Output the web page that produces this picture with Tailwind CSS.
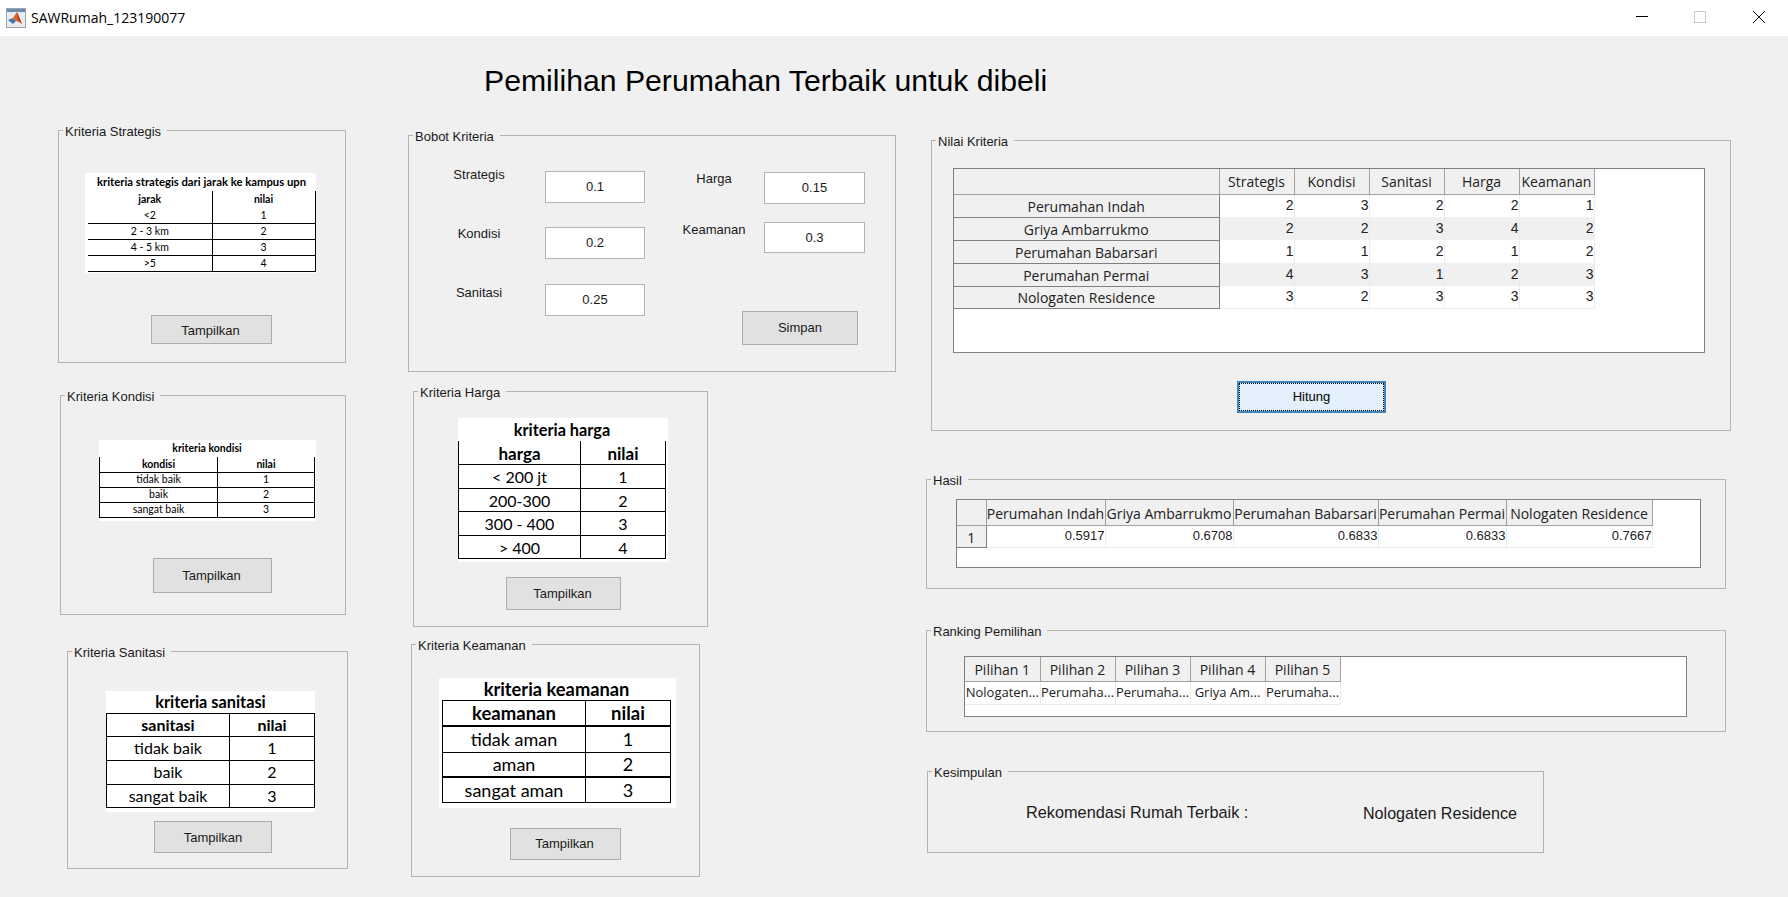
<!DOCTYPE html>
<html lang="id">
<head>
  <meta charset="UTF-8">
  <meta name="viewport" content="width=device-width, initial-scale=1.0">
  <title>SAWRumah_123190077</title>
  <script src="https://cdn.jsdelivr.net/npm/@tailwindcss/browser@4"></script>
</head>
<body class="w-[1788px] h-[897px] overflow-hidden bg-[#f0f0f0] text-[#1a1a1a] font-['Liberation_Sans',Arial,sans-serif]">

  <!-- title bar -->
  <header class="flex items-center h-9 bg-white">
    <svg class="ml-[6px] w-[20px] h-[20px]" viewBox="0 0 20 20">
      <rect x="0.5" y="0.5" width="19" height="19" fill="#e8ebef" stroke="#9aa5b1"/>
      <rect x="1" y="1" width="18" height="3" fill="#6d8bab"/>
      <path d="M2 12l5-2 3 3-3 3z" fill="#3f79b5"/>
      <path d="M7 10l4-6 5 12-3-2-3-1z" fill="#e2622a"/>
      <path d="M11 4l5 12-4-4z" fill="#b5391c"/>
    </svg>
    <span class="ml-[5px] -mt-[2px] text-[14px] text-black font-['Open_Sans',sans-serif]">SAWRumah_123190077</span>
    <div class="ml-auto flex items-center">
      <div class="w-[58px] h-9 pb-1 flex items-center justify-center"><div class="w-3 h-px bg-black"></div></div>
      <div class="w-[58px] h-9 pb-[2px] flex items-center justify-center"><div class="w-3 h-3 border border-[#cccccc]"></div></div>
      <div class="w-[59px] h-9 pb-[2px] flex items-center justify-center">
        <svg class="w-3 h-3" viewBox="0 0 12 12"><path d="M0 0l12 12M12 0L0 12" stroke="#000" fill="none"/></svg>
      </div>
    </div>
  </header>

  <h1 class="h-[94px] pl-[484px] pt-[27px] text-[30.2px] leading-[36px] text-black">Pemilihan Perumahan Terbaik untuk dibeli</h1>

  <main class="flex items-start">

    <!-- left column -->
    <div class="w-[350px] shrink-0 flex flex-col">
      <section class="relative ml-[58px] w-[288px] h-[233px] border border-[#b4b4b4]">
        <span class="absolute -top-[7px] left-[4px] bg-[#f0f0f0] pl-[2px] pr-[6px] text-[13px] leading-4">Kriteria Strategis</span>
        <div class="ml-[26px] mt-[42px] w-[231px] h-[100px] bg-white pl-[3px]">
          <table class="table-fixed border-collapse w-[227px] text-center text-[10.5px] leading-none text-black font-['Lato',sans-serif] [&_td]:border-black [&_td]:p-0">
            <colgroup><col class="w-[124px]"><col class="w-[103px]"></colgroup>
            <tr class="h-[18px]"><td colspan="2" class="font-bold text-[11.3px]">kriteria strategis dari jarak ke kampus upn</td></tr>
            <tr class="h-[16px] font-bold"><td class="border-r">jarak</td><td class="border-r">nilai</td></tr>
            <tr class="h-[16px]"><td class="border-r border-b">&lt;2</td><td class="border-r border-b">1</td></tr>
            <tr class="h-[16px]"><td class="border-r border-b">2 - 3 km</td><td class="border-r border-b">2</td></tr>
            <tr class="h-[16px]"><td class="border-r border-b">4 - 5 km</td><td class="border-r border-b">3</td></tr>
            <tr class="h-[16px]"><td class="border-r border-b">&gt;5</td><td class="border-r border-b">4</td></tr>
          </table>
        </div>
        <button class="flex items-center justify-center ml-[92px] mt-[42px] w-[121px] h-[29px] pt-[2px] pr-[2px] bg-[#e1e1e1] border border-[#adadad] text-[13px]">Tampilkan</button>
      </section>

      <section class="relative mt-[32px] ml-[60px] w-[286px] h-[220px] border border-[#b4b4b4]">
        <span class="absolute -top-[7px] left-[4px] bg-[#f0f0f0] pl-[2px] pr-[6px] text-[13px] leading-4">Kriteria Kondisi</span>
        <div class="ml-[38px] mt-[44px] w-[217px] h-[81px] bg-white">
          <table class="table-fixed border-collapse w-[215px] text-center text-[10.5px] leading-none text-black font-['Lato',sans-serif] [&_td]:border-black [&_td]:p-0">
            <colgroup><col class="w-[118px]"><col class="w-[97px]"></colgroup>
            <tr class="h-[17px]"><td colspan="2" class="font-bold">kriteria kondisi</td></tr>
            <tr class="h-[15px] font-bold"><td class="border-l border-r border-b">kondisi</td><td class="border-r border-b">nilai</td></tr>
            <tr class="h-[15px]"><td class="border-l border-r border-b">tidak baik</td><td class="border-r border-b">1</td></tr>
            <tr class="h-[15px]"><td class="border-l border-r border-b">baik</td><td class="border-r border-b">2</td></tr>
            <tr class="h-[15px]"><td class="border-l border-r border-b">sangat baik</td><td class="border-r border-b">3</td></tr>
          </table>
        </div>
        <button class="flex items-center justify-center ml-[92px] mt-[37px] w-[119px] h-[35px] pr-[2px] bg-[#e1e1e1] border border-[#adadad] text-[13px]">Tampilkan</button>
      </section>

      <section class="relative mt-[36px] ml-[67px] w-[281px] h-[218px] border border-[#b4b4b4]">
        <span class="absolute -top-[7px] left-[4px] bg-[#f0f0f0] pl-[2px] pr-[6px] text-[13px] leading-4">Kriteria Sanitasi</span>
        <div class="ml-[38px] mt-[39px] w-[209px] h-[121px] bg-white">
          <table class="table-fixed border-collapse w-[208px] text-center text-[16px] leading-none text-black font-['Lato',sans-serif] [&_td]:border-black [&_td]:p-0">
            <colgroup><col class="w-[123px]"><col class="w-[85px]"></colgroup>
            <tr class="h-[22px]"><td colspan="2" class="font-bold text-[16.3px]">kriteria sanitasi</td></tr>
            <tr class="h-[23px] font-bold"><td class="border border-black">sanitasi</td><td class="border">nilai</td></tr>
            <tr class="h-[24px]"><td class="border">tidak baik</td><td class="border">1</td></tr>
            <tr class="h-[24px]"><td class="border">baik</td><td class="border">2</td></tr>
            <tr class="h-[23px]"><td class="border">sangat baik</td><td class="border">3</td></tr>
          </table>
        </div>
        <button class="flex items-center justify-center ml-[86px] mt-[9px] w-[118px] h-[32px] pt-[2px] bg-[#e1e1e1] border border-[#adadad] text-[13px]">Tampilkan</button>
      </section>
    </div>

    <!-- middle column -->
    <div class="w-[560px] shrink-0 flex flex-col">
      <section class="relative mt-[5px] ml-[58px] w-[488px] h-[237px] border border-[#b4b4b4] flex items-start">
        <span class="absolute -top-[7px] left-[4px] bg-[#f0f0f0] pl-[2px] pr-[6px] text-[13px] leading-4">Bobot Kriteria</span>
        <div class="w-[236px] shrink-0 flex flex-col">
          <div class="mt-[35px] flex items-start">
            <label class="ml-5 w-[100px] -mt-[4px] text-center text-[13px] leading-4">Strategis</label>
            <div class="ml-4 w-[100px] h-[32px] bg-white border border-[#b4b4b4] flex items-center justify-center text-[13px]">0.1</div>
          </div>
          <div class="mt-[24px] flex items-start">
            <label class="ml-5 w-[100px] -mt-[1px] text-center text-[13px] leading-4">Kondisi</label>
            <div class="ml-4 w-[100px] h-[32px] bg-white border border-[#b4b4b4] flex items-center justify-center text-[13px]">0.2</div>
          </div>
          <div class="mt-[25px] flex items-start">
            <label class="ml-5 w-[100px] mt-px text-center text-[13px] leading-4">Sanitasi</label>
            <div class="ml-4 w-[100px] h-[32px] bg-white border border-[#b4b4b4] flex items-center justify-center text-[13px]">0.25</div>
          </div>
        </div>
        <div class="ml-[19px] flex flex-col">
          <div class="mt-[36px] flex items-start">
            <label class="w-[100px] -mt-[1px] text-center text-[13px] leading-4">Harga</label>
            <div class="w-[101px] h-[32px] bg-white border border-[#b4b4b4] flex items-center justify-center text-[13px]">0.15</div>
          </div>
          <div class="mt-[18px] flex items-start">
            <label class="w-[100px] text-center text-[13px] leading-4">Keamanan</label>
            <div class="w-[101px] h-[31px] bg-white border border-[#b4b4b4] flex items-center justify-center text-[13px]">0.3</div>
          </div>
          <button class="flex items-center justify-center ml-[78px] mt-[58px] w-[116px] h-[34px] bg-[#e1e1e1] border border-[#adadad] text-[13px]">Simpan</button>
        </div>
      </section>

      <section class="relative mt-[19px] ml-[63px] w-[295px] h-[236px] border border-[#b4b4b4]">
        <span class="absolute -top-[7px] left-[4px] bg-[#f0f0f0] pl-[2px] pr-[6px] text-[13px] leading-4">Kriteria Harga</span>
        <div class="ml-[44px] mt-[26px] w-[210px] h-[144px] bg-white">
          <table class="table-fixed border-collapse w-[207px] text-center text-[16px] leading-none text-black font-['Lato',sans-serif] [&_td]:border-black [&_td]:px-0 [&_td]:pt-[2px] [&_td]:pb-0">
            <colgroup><col class="w-[122px]"><col class="w-[85px]"></colgroup>
            <tr class="h-[23px]"><td colspan="2" class="font-bold text-[16.3px]">kriteria harga</td></tr>
            <tr class="h-[23px] font-bold"><td class="border-l border-r border-b text-[17px]">harga</td><td class="border-r border-b text-[17px]">nilai</td></tr>
            <tr class="h-[24px]"><td class="border-l border-r border-b">&lt; 200 jt</td><td class="border-r border-b">1</td></tr>
            <tr class="h-[23px]"><td class="border-l border-r border-b">200-300</td><td class="border-r border-b">2</td></tr>
            <tr class="h-[24px]"><td class="border-l border-r border-b">300 - 400</td><td class="border-r border-b">3</td></tr>
            <tr class="h-[23px]"><td class="border-l border-r border-b">&gt; 400</td><td class="border-r border-b">4</td></tr>
          </table>
        </div>
        <button class="flex items-center justify-center ml-[92px] mt-[15px] w-[115px] h-[33px] pr-[2px] bg-[#e1e1e1] border border-[#adadad] text-[13px]">Tampilkan</button>
      </section>

      <section class="relative mt-[17px] ml-[61px] w-[289px] h-[233px] border border-[#b4b4b4]">
        <span class="absolute -top-[7px] left-[4px] bg-[#f0f0f0] pl-[2px] pr-[6px] text-[13px] leading-4">Kriteria Keamanan</span>
        <div class="ml-[27px] mt-[33px] w-[237px] h-[130px] bg-white pl-[3px]">
          <table class="table-fixed border-collapse w-[228px] text-center text-[18px] leading-none text-black font-['Lato',sans-serif] [&_td]:border-black [&_td]:p-0">
            <colgroup><col class="w-[143px]"><col class="w-[85px]"></colgroup>
            <tr class="h-[22px]"><td colspan="2" class="font-bold text-[18.3px]">kriteria keamanan</td></tr>
            <tr class="h-[26px] font-bold"><td class="border-l border-r border-t border-b-2 text-[18.5px]">keamanan</td><td class="border-r border-t border-b-2 text-[18.5px]">nilai</td></tr>
            <tr class="h-[26px]"><td class="border-l border-r border-b">tidak aman</td><td class="border-r border-b">1</td></tr>
            <tr class="h-[25px]"><td class="border-l border-r border-b-2">aman</td><td class="border-r border-b-2">2</td></tr>
            <tr class="h-[25px]"><td class="border-l border-r border-b">sangat aman</td><td class="border-r border-b">3</td></tr>
          </table>
        </div>
        <button class="flex items-center justify-center ml-[98px] mt-[20px] w-[111px] h-[32px] pr-[2px] bg-[#e1e1e1] border border-[#adadad] text-[13px]">Tampilkan</button>
      </section>
    </div>

    <!-- right column -->
    <div class="flex-1 flex flex-col">
      <section class="relative mt-[10px] ml-[21px] w-[800px] h-[291px] border border-[#b4b4b4]">
        <span class="absolute -top-[7px] left-[4px] bg-[#f0f0f0] pl-[2px] pr-[6px] text-[13px] leading-4">Nilai Kriteria</span>
        <div class="ml-[21px] mt-[27px] w-[752px] h-[185px] bg-white border border-[#808080]">
          <table class="table-fixed border-collapse w-[640px] text-[14px] leading-none text-[#222222] font-['Open_Sans',sans-serif] [&_td]:px-0 [&_td]:pt-0 [&_td]:pb-[2px] [&_td]:font-['Liberation_Sans',sans-serif] [&_th]:px-0 [&_th]:pb-0 [&_th]:pt-[2px] [&_th]:font-normal">
            <colgroup><col class="w-[265px]"><col class="w-[75px]"><col class="w-[75px]"><col class="w-[75px]"><col class="w-[75px]"><col class="w-[75px]"></colgroup>
            <tr class="h-[25px] bg-[#f0f0f0]">
              <th class="border-r border-b border-[#a0a0a0]"></th>
              <th class="border-r border-b border-[#a0a0a0]">Strategis</th>
              <th class="border-r border-b border-[#a0a0a0]">Kondisi</th>
              <th class="border-r border-b border-[#a0a0a0]">Sanitasi</th>
              <th class="border-r border-b border-[#a0a0a0]">Harga</th>
              <th class="border-r border-b border-[#a0a0a0]">Keamanan</th>
            </tr>
            <tr class="h-[23px] bg-white text-right">
              <th class="bg-[#f0f0f0] text-center border-r border-b border-[#808080]">Perumahan Indah</th>
              <td class="border-r border-[#ececec] pr-[3px]">2</td><td class="border-r border-[#ececec] pr-[3px]">3</td><td class="border-r border-[#ececec] pr-[3px]">2</td><td class="border-r border-[#ececec] pr-[3px]">2</td><td class="border-r border-[#ececec] pr-[3px]">1</td>
            </tr>
            <tr class="h-[23px] bg-[#f0f0f0] text-right">
              <th class="text-center border-r border-b border-[#808080]">Griya Ambarrukmo</th>
              <td class="border-r border-[#ececec] pr-[3px]">2</td><td class="border-r border-[#ececec] pr-[3px]">2</td><td class="border-r border-[#ececec] pr-[3px]">3</td><td class="border-r border-[#ececec] pr-[3px]">4</td><td class="border-r border-[#ececec] pr-[3px]">2</td>
            </tr>
            <tr class="h-[23px] bg-white text-right">
              <th class="bg-[#f0f0f0] text-center border-r border-b border-[#808080]">Perumahan Babarsari</th>
              <td class="border-r border-[#ececec] pr-[3px]">1</td><td class="border-r border-[#ececec] pr-[3px]">1</td><td class="border-r border-[#ececec] pr-[3px]">2</td><td class="border-r border-[#ececec] pr-[3px]">1</td><td class="border-r border-[#ececec] pr-[3px]">2</td>
            </tr>
            <tr class="h-[23px] bg-[#f0f0f0] text-right">
              <th class="text-center border-r border-b border-[#808080]">Perumahan Permai</th>
              <td class="border-r border-[#ececec] pr-[3px]">4</td><td class="border-r border-[#ececec] pr-[3px]">3</td><td class="border-r border-[#ececec] pr-[3px]">1</td><td class="border-r border-[#ececec] pr-[3px]">2</td><td class="border-r border-[#ececec] pr-[3px]">3</td>
            </tr>
            <tr class="h-[22px] bg-white text-right">
              <th class="bg-[#f0f0f0] text-center border-r border-b border-[#808080]">Nologaten Residence</th>
              <td class="border-r border-b border-[#ececec] pr-[3px]">3</td><td class="border-r border-b border-[#ececec] pr-[3px]">2</td><td class="border-r border-b border-[#ececec] pr-[3px]">3</td><td class="border-r border-b border-[#ececec] pr-[3px]">3</td><td class="border-r border-b border-[#ececec] pr-[3px]">3</td>
            </tr>
          </table>
        </div>
        <button class="ml-[305px] mt-[28px] w-[149px] h-[32px] bg-[#e3f0fb] border-2 border-[#3d86bf] text-[13px] text-black">
          <span class="flex items-center justify-center w-full h-full border border-dotted border-black">Hitung</span>
        </button>
      </section>

      <section class="relative mt-[48px] ml-[16px] w-[800px] h-[110px] border border-[#b4b4b4]">
        <span class="absolute -top-[7px] left-[4px] bg-[#f0f0f0] pl-[2px] pr-[6px] text-[13px] leading-4">Hasil</span>
        <div class="ml-[29px] mt-[19px] w-[745px] h-[69px] bg-white border border-[#808080]">
          <table class="table-fixed border-collapse w-[695px] text-[14px] leading-none text-[#222222] font-['Open_Sans',sans-serif] [&_td]:px-0 [&_td]:pt-0 [&_td]:pb-[2px] [&_td]:text-[13px] [&_td]:font-['Liberation_Sans',sans-serif] [&_th]:px-0 [&_th]:pb-0 [&_th]:pt-[3px] [&_th]:font-normal">
            <colgroup><col class="w-[29px]"><col class="w-[119px]"><col class="w-[128px]"><col class="w-[145px]"><col class="w-[128px]"><col class="w-[146px]"></colgroup>
            <tr class="h-[25px] bg-[#f0f0f0]">
              <th class="border-r border-b border-[#a0a0a0]"></th>
              <th class="border-r border-b border-[#a0a0a0]">Perumahan Indah</th>
              <th class="border-r border-b border-[#a0a0a0]">Griya Ambarrukmo</th>
              <th class="border-r border-b border-[#a0a0a0]">Perumahan Babarsari</th>
              <th class="border-r border-b border-[#a0a0a0]">Perumahan Permai</th>
              <th class="border-r border-b border-[#a0a0a0]">Nologaten Residence</th>
            </tr>
            <tr class="h-[22px] text-right">
              <th class="bg-[#f0f0f0] text-center border-r border-b border-[#808080]">1</th>
              <td class="border-r border-b border-[#ececec] pr-[3px]">0.5917</td>
              <td class="border-r border-b border-[#ececec] pr-[3px]">0.6708</td>
              <td class="border-r border-b border-[#ececec] pr-[3px]">0.6833</td>
              <td class="border-r border-b border-[#ececec] pr-[3px]">0.6833</td>
              <td class="border-r border-b border-[#ececec] pr-[3px]">0.7667</td>
            </tr>
          </table>
        </div>
      </section>

      <section class="relative mt-[41px] ml-[16px] w-[800px] h-[102px] border border-[#b4b4b4]">
        <span class="absolute -top-[7px] left-[4px] bg-[#f0f0f0] pl-[2px] pr-[6px] text-[13px] leading-4">Ranking Pemilihan</span>
        <div class="ml-[37px] mt-[25px] w-[723px] h-[61px] bg-white border border-[#808080]">
          <table class="table-fixed border-collapse w-[375px] text-[14px] leading-none text-[#222222] font-['Open_Sans',sans-serif] [&_td]:p-0 [&_th]:px-0 [&_th]:pb-0 [&_th]:pt-[2px] [&_th]:font-normal">
            <colgroup><col class="w-[75px]"><col class="w-[75px]"><col class="w-[75px]"><col class="w-[75px]"><col class="w-[75px]"></colgroup>
            <tr class="h-[24px] bg-[#f0f0f0]">
              <th class="border-r border-b border-[#a0a0a0]">Pilihan 1</th>
              <th class="border-r border-b border-[#a0a0a0]">Pilihan 2</th>
              <th class="border-r border-b border-[#a0a0a0]">Pilihan 3</th>
              <th class="border-r border-b border-[#a0a0a0]">Pilihan 4</th>
              <th class="border-r border-b border-[#a0a0a0]">Pilihan 5</th>
            </tr>
            <tr class="h-[23px] text-center text-[13px]">
              <td class="border-r border-b border-[#ececec]">Nologaten...</td>
              <td class="border-r border-b border-[#ececec]">Perumaha...</td>
              <td class="border-r border-b border-[#ececec]">Perumaha...</td>
              <td class="border-r border-b border-[#ececec]">Griya Am...</td>
              <td class="border-r border-b border-[#ececec]">Perumaha...</td>
            </tr>
          </table>
        </div>
      </section>

      <section class="relative mt-[39px] ml-[17px] w-[617px] h-[82px] border border-[#b4b4b4]">
        <span class="absolute -top-[7px] left-[4px] bg-[#f0f0f0] pl-[2px] pr-[6px] text-[13px] leading-4">Kesimpulan</span>
        <div class="ml-[98px] mt-[31px] flex items-center h-5">
          <span class="w-[337px] -mt-[2px] text-[16.3px]">Rekomendasi Rumah Terbaik :</span>
          <span class="text-[16.1px]">Nologaten Residence</span>
        </div>
      </section>
    </div>
  </main>
</body>
</html>
